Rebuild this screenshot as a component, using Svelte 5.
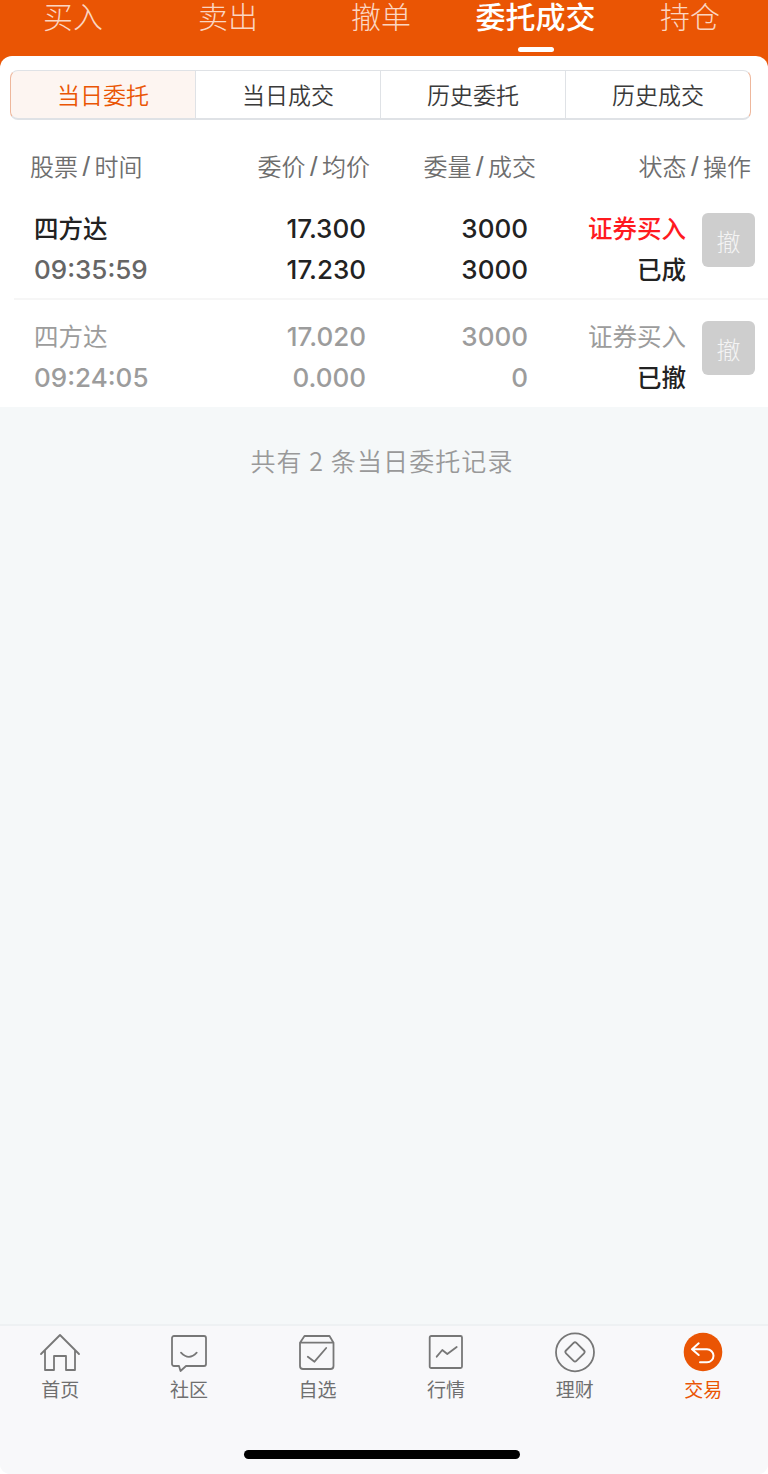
<script>
  const tabs = [
    { label: '买入' },
    { label: '卖出' },
    { label: '撤单' },
    { label: '委托成交', active: true },
    { label: '持仓' }
  ];
  const segments = ['当日委托', '当日成交', '历史委托', '历史成交'];
  const orders = [
    { name: '四方达', time: '09:35:59', price: '17.300', avg: '17.230', qty: '3000', done: '3000', type: '证券买入', status: '已成', live: true },
    { name: '四方达', time: '09:24:05', price: '17.020', avg: '0.000', qty: '3000', done: '0', type: '证券买入', status: '已撤', live: false }
  ];
</script>

<div class="page">
  <header class="tabs">
    {#each tabs as t}
      <div class="tab" class:active={t.active}>{t.label}</div>
    {/each}
  </header>

  <main class="sheet">
    <div class="seg">
      {#each segments as s, i}
        <div class="cell" class:on={i === 0}><span>{s}</span></div>
      {/each}
    </div>

    <div class="row head">
      <div class="c1">股票<i>/</i>时间</div>
      <div class="c2">委价<i>/</i>均价</div>
      <div class="c3">委量<i>/</i>成交</div>
      <div class="c4">状态<i>/</i>操作</div>
    </div>

    {#each orders as o}
      <div class="order" class:dead={!o.live}>
        <div class="row line">
          <div class="c1 name">{o.name}</div>
          <div class="c2 num">{o.price}</div>
          <div class="c3 num">{o.qty}</div>
          <div class="c4n type">{o.type}</div>
        </div>
        <div class="row line">
          <div class="c1 time">{o.time}</div>
          <div class="c2 num">{o.avg}</div>
          <div class="c3 num">{o.done}</div>
          <div class="c4n status">{o.status}</div>
        </div>
        <div class="cancel">撤</div>
      </div>
    {/each}
  </main>

  <div class="total">共有 2 条当日委托记录</div>

  <nav class="nav">
    <div class="items">
      <div class="item">
        <svg viewBox="0 0 44 44"><path d="M3 23 22 4l19 19M7 19v20h9V25h12v14h9V19"/></svg>
        <span>首页</span>
      </div>
      <div class="item">
        <svg viewBox="0 0 44 44"><path d="M7 5h30a2 2 0 0 1 2 2v26a2 2 0 0 1-2 2H19l-5.500 5L12 35H7a2 2 0 0 1-2-2V7a2 2 0 0 1 2-2z"/><path d="M14 21.700Q22 30 29.700 21.700"/></svg>
        <span>社区</span>
      </div>
      <div class="item">
        <svg viewBox="0 0 44 44"><path d="M9.500 5h25l4 6.700V35a3 3 0 0 1-3 3H8a3 3 0 0 1-3-3V11.700zM5 11.700h33.500"/><path d="M12.800 25.700l6.700 5L31.200 17"/></svg>
        <span>自选</span>
      </div>
      <div class="item">
        <svg viewBox="0 0 44 44"><rect x="5.700" y="5" width="32.300" height="32" rx="1.500"/><path d="M12.700 25.700 18.300 19l5 4 9.400-7"/></svg>
        <span>行情</span>
      </div>
      <div class="item">
        <svg viewBox="0 0 44 44"><circle cx="22" cy="21.300" r="19"/><path d="M20.600 11.900a2 2 0 0 1 2.800 0l7.600 7.600a2 2 0 0 1 0 2.800l-7.600 7.600a2 2 0 0 1-2.800 0L13 22.300a2 2 0 0 1 0-2.800z"/></svg>
        <span>理财</span>
      </div>
      <div class="item current">
        <svg viewBox="0 0 44 44"><circle class="disc" cx="22" cy="21" r="19.300"/><path class="back" d="M17.700 12.300 11 18.300l6.700 5.700M11 18.300h15a6.500 6.500 0 0 1 0 13h-7"/></svg>
        <span>交易</span>
      </div>
    </div>
    <div class="home"></div>
  </nav>
</div>

<style>
  :global(body) {
    margin: 0;
    background: #fff;
  }
  .page {
    width: 768px;
    height: 1474px;
    display: flex;
    flex-direction: column;
    background: #f5f8f9;
    font-family: "Noto Sans CJK SC", "Liberation Sans", sans-serif;
    overflow: hidden;
    border-radius: 0 0 10px 10px;
  }
  .tabs {
    height: 68px;
    flex: none;
    background: #ea5504;
    display: grid;
    grid-template-columns: 146px 164px 142px 167px 142px;
    margin-bottom: -12px;
  }
  .tab {
    position: relative;
    text-align: center;
    font-size: 30px;
    line-height: 30px;
    color: #fbd6c2;
    font-weight: 300;
  }
  .tab.active {
    color: #fff;
    font-weight: 500;
  }
  .tab.active::after {
    content: "";
    position: absolute;
    left: 50%;
    top: 47px;
    width: 36px;
    height: 5px;
    margin-left: -18px;
    border-radius: 3px;
    background: #fff;
  }
  .sheet {
    background: #fff;
    border-radius: 12px 12px 0 0;
    height: 351px;
    flex: none;
    box-sizing: border-box;
    padding-top: 14px;
  }
  .seg {
    margin-left: 10px;
    width: 741px;
    height: 50px;
    display: grid;
    grid-template-columns: 186px 185px 185px 185px;
  }
  .cell {
    display: flex;
    align-items: center;
    justify-content: center;
    font-size: 23px;
    color: #3a3a3a;
    font-weight: 350;
    background: #fff;
    border: 1.500px solid #dfe2e6;
    border-bottom-width: 2px;
    border-left-width: 0;
    box-sizing: border-box;
  }
  .cell span {
    margin-bottom: 1px;
  }
  .cell:first-child {
    border-left: 1.500px solid #eeb79c;
    border-radius: 8px 0 0 8px;
  }
  .cell:last-child {
    border-right: 1.500px solid #eeb79c;
    border-radius: 0 8px 8px 0;
  }
  .cell.on {
    color: #ea5504;
    background: #fdf5f1;
  }
  .row {
    display: grid;
    grid-template-columns: 34px 120px 212px 162px 158px;
    align-items: center;
  }
  .c1 { grid-column: 2; }
  .c2 { grid-column: 3; text-align: right; }
  .c3 { grid-column: 4; text-align: right; }
  .c4n { grid-column: 5; text-align: right; }
  .head {
    height: 66px;
    margin-top: 14px;
    font-size: 24px;
    color: #6e6e6e;
    font-weight: 350;
    grid-template-columns: 30px 130px 210px 166px 215px;
  }
  .head > div {
    margin-bottom: 4px;
    white-space: nowrap;
  }
  .head .c4 { grid-column: 5; text-align: right; }
  .head i {
    font-style: normal;
    font-family: "Liberation Sans", sans-serif;
    font-size: 27px;
    font-weight: 400;
    margin: 0 4.500px;
    line-height: 24px;
  }
  .order {
    position: relative;
    height: 100px;
    box-sizing: border-box;
    padding-top: 8px;
    border-bottom: 2px solid #f6f6f6;
    margin-left: 14px;
  }
  .order .row {
    margin-left: -14px;
    height: 41px;
  }
  .order.dead {
    height: 107px;
    padding-top: 16px;
    border-bottom: 0;
  }
  .name {
    font-size: 24.500px;
    color: #222;
    font-weight: 500;
    margin-bottom: 2px;
    white-space: nowrap;
  }
  .time {
    font-family: "Inter", "Liberation Sans", sans-serif;
    font-size: 26px;
    color: #666;
    font-weight: 500;
    white-space: nowrap;
  }
  .num {
    font-family: "Inter", "Liberation Sans", sans-serif;
    font-size: 26px;
    font-weight: 500;
    color: #222;
  }
  .type {
    font-size: 24.500px;
    color: #ff1a1f;
    font-weight: 500;
    margin-bottom: 2px;
  }
  .status {
    font-size: 24.500px;
    color: #222;
    font-weight: 500;
    margin-bottom: 2px;
  }
  .dead .name, .dead .type {
    color: #9c9c9c;
    font-weight: 400;
  }
  .dead .num, .dead .time {
    color: #9c9c9c;
  }
  .cancel {
    position: absolute;
    right: 13px;
    top: 13px;
    width: 53px;
    height: 54px;
    border-radius: 6px;
    background: #cecece;
    color: #f4f4f4;
    font-size: 24px;
    font-weight: 300;
    display: flex;
    align-items: center;
    justify-content: center;
  }
  .dead .cancel {
    top: 21px;
  }
  .total {
    margin-top: 35px;
    text-align: center;
    font-size: 25px;
    line-height: 36px;
    color: #999;
    letter-spacing: 1.100px;
    font-weight: 350;
    margin-left: -4px;
  }
  .nav {
    margin-top: auto;
    height: 150px;
    flex: none;
    box-sizing: border-box;
    background: #f8f8fa;
    border-top: 2px solid #eef1f3;
    padding-top: 5px;
    display: flex;
    flex-direction: column;
  }
  .items {
    display: grid;
    grid-template-columns: repeat(6, 128.600px);
    margin-left: -4px;
  }
  .item {
    display: flex;
    flex-direction: column;
    align-items: center;
    font-size: 19px;
    line-height: 26px;
    color: #6f6f6f;
  }
  .item svg {
    width: 44px;
    height: 44px;
    fill: none;
    stroke: #777;
    stroke-width: 1.800;
    stroke-linejoin: round;
    stroke-linecap: round;
    margin-bottom: 1px;
  }
  .item.current { color: #ea5504; }
  .item svg .disc { fill: #ea5504; stroke: none; }
  .item svg .back { stroke: #fff; stroke-width: 2; }
  .home {
    width: 276px;
    height: 9px;
    border-radius: 5px;
    background: #000;
    margin: 48px 0 0 244px;
  }
</style>
